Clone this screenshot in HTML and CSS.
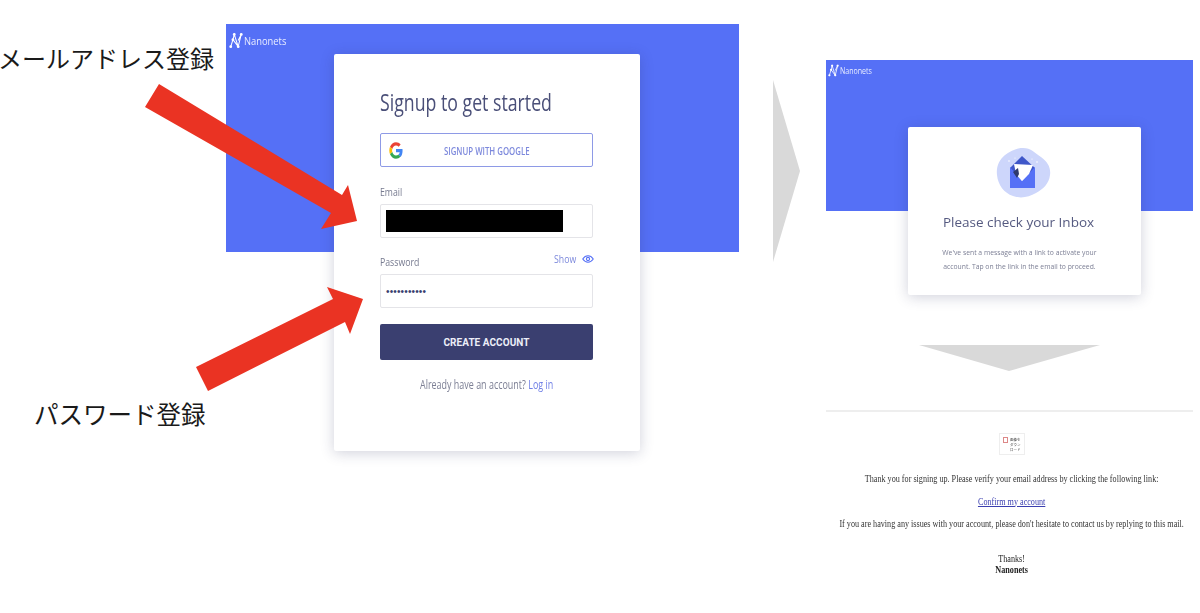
FILE: index.html
```html
<!DOCTYPE html>
<html lang="ja">
<head>
  <meta charset="UTF-8" />
  <title>Nanonets signup steps</title>
  <link rel="stylesheet" href="styles.css">
</head>
<body>
  <main class="slide">
    <p class="note note-email">メールアドレス登録</p>
    <p class="note note-password">パスワード登録</p>

    <!-- signup screen -->
    <section class="signup">
      <div class="brand">
        <svg class="brand-mark" viewBox="0 0 16 18"><use href="#nano-logo"/></svg>
        <span class="brand-name">Nanonets</span>
      </div>
      <div class="card signup-card">
        <h1 class="squeeze signup-title">Signup to get started</h1>
        <button class="google-btn">
          <svg class="google-icon" viewBox="0 0 48 48" preserveAspectRatio="none">
            <path fill="#ea4335" d="M24 10c3.500 0 6.600 1.200 9.100 3.600l6.800-6.800C35.800 3 30.400 1 24 1 15 1 7.300 6.100 3.500 13.600l7.900 6.100C13.300 14 18.200 10 24 10z"/>
            <path fill="#4285f4" d="M46.500 24.500c0-1.600-.2-3.100-.4-4.500H24v9h12.700c-.6 2.900-2.200 5.400-4.700 7l7.700 6c4.500-4.200 6.800-10.300 6.800-17.500z"/>
            <path fill="#fbbc05" d="M11.400 28.300c-.5-1.400-.8-2.800-.8-4.300s.3-2.900.8-4.300l-7.900-6.100C1.900 16.800 1 20.300 1 24s.9 7.200 2.500 10.400l7.900-6.100z"/>
            <path fill="#34a853" d="M24 47c6.200 0 11.500-2 15.300-5.600L32 36c-2.100 1.400-4.800 2.200-8 2.200-5.800 0-10.700-3.900-12.600-9.900l-7.900 6.100C7.300 41.900 15 47 24 47z"/>
          </svg>
          <span class="squeeze google-label">SIGNUP WITH GOOGLE</span>
        </button>
        <label class="squeeze field-label email-label">Email</label>
        <div class="field"><span class="redacted"></span></div>
        <div class="password-row">
          <label class="squeeze field-label">Password</label>
          <span class="show-toggle">
            <span class="squeeze show-label">Show</span>
            <svg class="eye" viewBox="0 0 24 16">
              <path d="M1.500 8C4.500 3.500 8 1.500 12 1.500S19.500 3.500 22.500 8C19.500 12.500 16 14.500 12 14.500S4.500 12.500 1.500 8z"/>
              <circle cx="12" cy="8" r="3.200"/>
            </svg>
          </span>
        </div>
        <div class="field"><span class="dots">•••••••••••</span></div>
        <button class="create-btn">CREATE ACCOUNT</button>
        <p class="login-line"><span class="squeeze login-text">Already have an account? <a href="#">Log in</a></span></p>
      </div>
    </section>

    <!-- inbox screen -->
    <section class="inbox">
      <div class="brand brand-small">
        <svg class="brand-mark" viewBox="0 0 16 18"><use href="#nano-logo"/></svg>
        <span class="brand-name">Nanonets</span>
      </div>
      <div class="card inbox-card">
        <svg class="mail-icon" viewBox="0 0 56 52">
          <path fill="#cdd6fb" d="M27 1c8 0 12 5 18 9 7 5 10 11 9 18-1 9-7 14-14 18-7 4-15 6-23 3C8 46 2 38 1 28 0 20 3 13 9 8 14 4 20 1 27 1z"/>
          <path fill="#3f57c9" d="M26 9l13 12v8H14v-8z"/>
          <path fill="#5570f6" d="M14 20l12 14 13-14v21H14z"/>
          <path fill="#fff" d="M18 17l19 1-4 9-7 7-6-7z"/>
          <path fill="#2f3a6e" d="M17 25l5-4 1 6-2 4z"/>
          <g fill="#fff">
            <circle cx="13" cy="14" r=".8"/><circle cx="41" cy="15" r=".8"/><circle cx="19" cy="11" r=".6"/><circle cx="36" cy="12" r=".6"/>
          </g>
        </svg>
        <h2 class="inbox-title">Please check your Inbox</h2>
        <p class="inbox-text">We've sent a message with a link to activate your<br>account. Tap on the link in the email to proceed.</p>
      </div>
    </section>

    <!-- confirmation mail -->
    <section class="mail">
      <div class="mail-logo">
        <span class="broken-img"></span>
        <span class="broken-alt">画像を<br>ダウン<br>ロード</span>
      </div>
      <p class="mail-line first">Thank you for signing up. Please verify your email address by clicking the following link:</p>
      <p class="mail-line"><a href="#">Confirm my account</a></p>
      <p class="mail-line">If you are having any issues with your account, please don't hesitate to contact us by replying to this mail.</p>
      <p class="mail-sign">Thanks!<br><b>Nanonets</b></p>
    </section>

    <!-- arrows sit on top of everything -->
    <svg class="overlay" viewBox="0 0 1200 613">
      <polygon fill="#d9d9d9" points="773,80 800,171 773,262"/>
      <polygon fill="#d9d9d9" points="919,345 1100,345 1009,371"/>
      <polygon fill="#ea3323" points="159,84 342,195 348,185 357,221 321,229 331,213 145,107"/>
      <polygon fill="#ea3323" points="196,367 333,299 327,287 363,299 350,334 345,322 208,391"/>
    </svg>
  </main>

  <svg class="defs" width="0" height="0">
    <symbol id="nano-logo" viewBox="0 0 16 18">
      <path fill="none" stroke="#fff" stroke-width="1.200" d="M2 16l2.500-8 6 8 3.500-14M4.500 8L6 2l4.500 14M10.500 9L14 2"/>
      <g fill="#fff">
        <circle cx="2" cy="16" r="1.600"/><circle cx="4.500" cy="8" r="1.600"/><circle cx="6" cy="2" r="1.600"/>
        <circle cx="10.500" cy="16" r="1.600"/><circle cx="14" cy="2" r="1.600"/>
      </g>
    </symbol>
  </svg>
</body>
</html>
```

FILE: styles.css
```css
* { box-sizing: border-box; }
html, body { margin: 0; height: 100%; background: #fff; overflow: hidden; }
body { font-family: "Open Sans", "Noto Sans", sans-serif; color: #3a3f70; }
p, h1, h2 { margin: 0; font-weight: 400; }
a { color: #6f7fe6; text-decoration: none; }

.slide { position: relative; width: 1200px; height: 613px; overflow: hidden; }

/* horizontally squeezed text, the source picture was stretched */
.squeeze { display: inline-block; transform: scaleX(0.76); transform-origin: left center; white-space: nowrap; }

.note {
  position: absolute;
  font-family: "Noto Sans CJK JP", sans-serif;
  font-weight: 400;
  font-size: 24px;
  line-height: 30px;
  color: #1a1a1a;
  white-space: nowrap;
}
.note-email { left: -2px; top: 43px; }
.note-password { left: 34px; top: 399px; font-size: 24.500px; }

.overlay { position: absolute; left: 0; top: 0; width: 1200px; height: 613px; pointer-events: none; }
.defs { position: absolute; }

/* shared */
.brand { display: flex; align-items: center; gap: 1px; height: 30px; padding: 3px 0 0 3px; color: #fff; }
.brand-mark { width: 14px; height: 17px; flex: none; }
.brand-name { display: inline-block; font-size: 11px; transform: scaleX(0.85); transform-origin: left center; color: #e9edff; }
.brand-small { height: 67px; padding: 0 0 0 2px; align-items: flex-start; }
.brand-small .brand-mark { width: 11px; height: 13px; margin-top: 4px; }
.brand-small .brand-name { font-size: 8.300px; margin-top: 5px; }
.card { background: #fff; border-radius: 2px; box-shadow: 0 2px 14px rgba(40, 45, 90, 0.22); }

/* signup */
.signup {
  position: absolute;
  left: 226px;
  top: 24px;
  width: 513px;
  height: 430px;
  background: linear-gradient(#5570f6 228px, transparent 228px);
  filter: blur(0.35px);
}
.signup-card { margin-left: 108px; width: 306px; height: 397px; padding: 33px 46px 0; display: flex; flex-direction: column; }
.signup-title { font-size: 23px; line-height: 30px; color: #4a4f78; margin-bottom: 16px; transform: scaleX(0.77); }
.google-btn {
  display: flex;
  align-items: center;
  width: 213px;
  height: 34px;
  padding: 0 8px;
  background: #fff;
  border: 1px solid #8e9ae6;
  border-radius: 2px;
  font: inherit;
}
.google-icon { width: 14px; height: 17px; flex: none; }
.google-label { margin-left: 41px; padding-top: 1px; font-size: 10.500px; font-weight: 600; color: #7d89dc; transform: scaleX(0.745); }
.field-label { font-size: 11.500px; line-height: 16px; color: #777b90; }
.email-label { margin-top: 17px; margin-bottom: 4px; }
.field {
  display: flex;
  align-items: center;
  width: 213px;
  height: 34px;
  padding: 0 5px;
  border: 1px solid #e4e4e8;
  border-radius: 2px;
  background: #fff;
}
.redacted { width: 177px; height: 22px; background: #000; }
.dots { font-family: "Liberation Sans", sans-serif; font-size: 10px; letter-spacing: 0.150px; color: #3a3f70; }
.password-row { display: flex; justify-content: space-between; align-items: flex-start; margin-top: 16px; height: 20px; }
.show-toggle { display: flex; align-items: center; margin-top: -3px; }
.show-label { width: 28px; font-size: 11.500px; line-height: 16px; color: #7d89dc; }
.eye { width: 12px; height: 8px; fill: none; stroke: #5570f6; stroke-width: 2.200; }
.create-btn {
  margin-top: 16px;
  width: 213px;
  height: 36px;
  border: 0;
  border-radius: 2px;
  background: #3a3f70;
  color: #eceef8;
  font-family: "Roboto", sans-serif;
  font-size: 10px;
  font-weight: 700;
  letter-spacing: 0.050px;
}
.login-line { margin-top: 16px; padding-left: 40px; font-size: 12.500px; line-height: 18px; color: #7c7f94; }
.login-text { transform: scaleX(0.716); }

/* inbox */
.inbox {
  position: absolute;
  left: 826px;
  top: 60px;
  width: 367px;
  height: 240px;
  background: linear-gradient(#5570f6 151px, transparent 151px);
  filter: blur(0.35px);
}
.inbox-card { margin-left: 82px; width: 233px; height: 168px; padding-top: 20px; text-align: center; }
.mail-icon { display: block; width: 56px; height: 52px; margin: 0 0 0 88px; }
.inbox-title { margin-top: 13px; padding-right: 12px; font-size: 13.500px; line-height: 20px; color: #555a80; }
.inbox-text { margin-top: 13px; padding-right: 12px; font-size: 8px; line-height: 14px; color: #7b7e94; transform: scaleX(0.85); white-space: nowrap; }

/* mail */
.mail {
  position: absolute;
  left: 826px;
  top: 410px;
  width: 367px;
  border-top: 2px solid #eeeeee;
  font-family: "Liberation Serif", serif;
  font-size: 9.500px;
  color: #333;
  text-align: center;
  filter: blur(0.3px);
}
.mail-logo {
  display: flex;
  gap: 2px;
  width: 26px;
  height: 22px;
  margin: 21px 0 0 173px;
  padding: 3px;
  border: 1px solid #eee;
  text-align: left;
}
.broken-img { flex: none; width: 5px; height: 6px; border: 1px solid #d88; background: #fff; }
.broken-alt { font-family: "Noto Sans CJK JP", sans-serif; font-size: 3.500px; line-height: 5px; color: #444; white-space: nowrap; }
.mail-line { display: flex; justify-content: center; padding-left: 5px; line-height: 12px; margin-bottom: 10.500px; white-space: nowrap; transform: scaleX(0.857); }
.mail-line.first { margin-top: 18px; }
.mail-line a { color: #3b3fb0; text-decoration: underline; }
.mail-sign { padding-left: 5px; margin-top: 24px; line-height: 11px; color: #222; transform: scaleX(0.857); }
```
